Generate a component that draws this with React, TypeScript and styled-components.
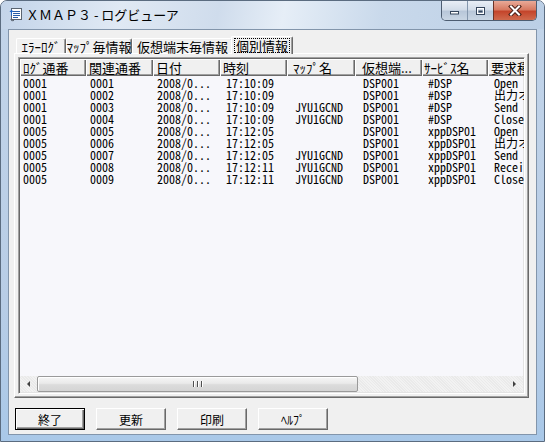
import styled, { createGlobalStyle } from 'styled-components';

const GlobalStyle = createGlobalStyle`
  html, body {
    margin: 0;
    padding: 0;
    background: #ffffff;
  }
  body {
    font-family: "Noto Sans CJK JP", "Liberation Sans", sans-serif;
  }
`;

const Window = styled.div`
  width: 545px;
  height: 442px;
  box-sizing: border-box;
  display: flex;
  flex-direction: column;
  border: 1px solid #5b6c80;
  border-radius: 7px 7px 0 0;
  overflow: hidden;
  background: linear-gradient(180deg, #cddcee 0px, #c2d4e9 28px, #b8cde6 300px, #a9c8e8 100%);
`;

const TitleBar = styled.div`
  height: 28px;
  flex-shrink: 0;
  display: flex;
  align-items: flex-start;
  padding-left: 7px;
  background: linear-gradient(100deg, #c3d4e9 0%, #e0e9f4 22%, #cfdcec 40%, #e6eef7 52%, #c9d9eb 70%, #bbcfe6 100%);
`;

const AppIcon = styled.svg`
  width: 16px;
  height: 16px;
  margin-top: 5px;
  flex-shrink: 0;
`;

const Title = styled.div`
  margin-left: 2px;
  margin-top: 6px;
  font-size: 13px;
  line-height: 16px;
  color: #000;
  white-space: nowrap;
`;

const CaptionGroup = styled.div`
  margin-left: auto;
  margin-right: 7px;
  display: flex;
  height: 19px;
  border: 1px solid #4d5d71;
  border-top: none;
  border-radius: 0 0 5px 5px;
  overflow: hidden;
`;

const CaptionButton = styled.div<{ $w: number; $close?: boolean }>`
  width: ${({ $w }) => $w}px;
  height: 19px;
  display: flex;
  align-items: center;
  justify-content: center;
  box-sizing: border-box;
  border-left: ${({ $close }) => ($close ? '1px solid #6b3326' : '1px solid #8497ad')};
  &:first-child {
    border-left: none;
  }
  background: ${({ $close }) =>
    $close
      ? 'linear-gradient(180deg, #e9aa98 0%, #d77a62 45%, #c4452b 55%, #cf6a4d 100%)'
      : 'linear-gradient(180deg, #e8eef6 0%, #d3dde9 45%, #b8c7d9 55%, #c9d6e4 100%)'};
`;

const Client = styled.div`
  flex: 1;
  margin: 0 7px 6px 7px;
  border: 1px solid #8295ab;
  background: #f0f0f0;
  display: flex;
  flex-direction: column;
  padding: 6px 7px 4px 5px;
  min-height: 0;
`;

const TabStrip = styled.div`
  height: 17px;
  display: flex;
  align-items: flex-end;
  padding-left: 2px;
  flex-shrink: 0;
`;

const Tab = styled.div<{ $w: number; $active?: boolean }>`
  position: relative;
  width: ${({ $w }) => $w}px;
  height: ${({ $active }) => ($active ? 18 : 15)}px;
  margin: ${({ $active }) => ($active ? '0 -2px -1px -2px' : '0')};
  z-index: ${({ $active }) => ($active ? 1 : 0)};
  box-sizing: border-box;
  background: #f0f0f0;
  border-top: 1px solid #ffffff;
  border-left: 1px solid #ffffff;
  border-right: 1px solid #696969;
  border-radius: 2px 2px 0 0;
  box-shadow: inset -1px 0 0 #a0a0a0;
  display: flex;
  align-items: ${({ $active }) => ($active ? 'flex-start' : 'center')};
  justify-content: center;
  font-size: 13px;
  line-height: 13px;
  color: #000;
  white-space: nowrap;
`;

const FocusLabel = styled.span`
  margin-top: 2px;
  padding: 0 1px;
  outline: 1px dotted #000;
  outline-offset: 0px;
`;

const Panel = styled.div`
  flex: 1;
  min-height: 0;
  display: flex;
  flex-direction: column;
  border-top: 1px solid #ffffff;
  border-left: 1px solid #ffffff;
  border-right: 1px solid #696969;
  border-bottom: 1px solid #696969;
  box-shadow: inset -1px -1px 0 #a0a0a0;
  padding: 3px;
`;

const ListView = styled.div`
  flex: 1;
  min-height: 0;
  display: flex;
  flex-direction: column;
  border-top: 1px solid #a0a0a0;
  border-left: 1px solid #a0a0a0;
  border-right: 1px solid #ffffff;
  border-bottom: 1px solid #ffffff;
  box-shadow: inset 1px 1px 0 #696969, inset -1px -1px 0 #e3e3e3;
  padding: 1px;
  background: #f7f7fb;
  overflow: hidden;
`;

const HeaderRow = styled.div`
  display: flex;
  height: 17px;
  flex-shrink: 0;
  background: #f0f0f0;
`;

const HeaderCell = styled.div<{ $w: number; $pad: number }>`
  width: ${({ $w }) => $w}px;
  flex-shrink: 0;
  box-sizing: border-box;
  padding-left: ${({ $pad }) => $pad}px;
  font-size: 13px;
  line-height: 17px;
  color: #000;
  white-space: nowrap;
  overflow: hidden;
  box-shadow: inset 1px 1px 0 #ffffff, inset -1px -1px 0 #696969, inset -2px -2px 0 #a0a0a0;
`;

const Rows = styled.div`
  flex: 1;
  min-height: 0;
  padding-top: 1px;
`;

const Row = styled.div`
  display: flex;
  height: 12px;
`;

const Cell = styled.div<{ $w: number; $pad: number }>`
  width: ${({ $w }) => $w}px;
  flex-shrink: 0;
  box-sizing: border-box;
  padding-left: ${({ $pad }) => $pad}px;
  font-size: 12px;
  line-height: 12px;
  font-feature-settings: "hwid" 1;
  color: #000;
  white-space: nowrap;
`;

const HScroll = styled.div`
  height: 16px;
  flex-shrink: 0;
  display: flex;
  align-items: stretch;
  background: repeating-linear-gradient(45deg, #eaeaea 0 1px, #f2f2f2 1px 2px);
`;

const ArrowButton = styled.div`
  width: 17px;
  display: flex;
  align-items: center;
  justify-content: center;
  flex-shrink: 0;
`;

const ArrowLeft = styled.div`
  width: 0;
  height: 0;
  border-top: 3px solid transparent;
  border-bottom: 3px solid transparent;
  border-right: 3px solid #404040;
`;

const ArrowRight = styled.div`
  width: 0;
  height: 0;
  border-top: 3px solid transparent;
  border-bottom: 3px solid transparent;
  border-left: 3px solid #404040;
`;

const Thumb = styled.div<{ $w: number }>`
  width: ${({ $w }) => $w}px;
  box-sizing: border-box;
  border: 1px solid #9a9a9a;
  border-radius: 2px;
  background: linear-gradient(180deg, #f6f6f6 0%, #eaeaea 45%, #dcdcdc 55%, #d4d4d4 100%);
  box-shadow: inset 1px 1px 0 #ffffff;
  display: flex;
  align-items: center;
  justify-content: center;
  gap: 1px;
`;

const Grip = styled.div`
  width: 1px;
  height: 6px;
  background: #505050;
  box-shadow: 1px 0 0 #ffffff;
  margin: 0 1px;
`;

const Track = styled.div`
  flex: 1;
`;

const ButtonRow = styled.div`
  display: flex;
  gap: 11px;
  padding: 10px 0 0 1px;
  flex-shrink: 0;
  height: 22px;
`;

const PushButton = styled.div<{ $default?: boolean }>`
  width: 70px;
  height: 22px;
  box-sizing: border-box;
  display: flex;
  align-items: center;
  justify-content: center;
  background: #f0f0f0;
  font-size: 12px;
  color: #000;
  border: 1px solid;
  border-color: ${({ $default }) =>
    $default ? '#000000' : '#ffffff #696969 #696969 #ffffff'};
  box-shadow: ${({ $default }) =>
    $default
      ? 'inset 1px 1px 0 #ffffff, inset -1px -1px 0 #696969, inset -2px -2px 0 #a0a0a0'
      : 'inset -1px -1px 0 #a0a0a0'};
`;

const columns = [
  { label: 'ﾛｸﾞ通番', width: 66, hpad: 3, dpad: 3 },
  { label: '関連通番', width: 67, hpad: 3, dpad: 4 },
  { label: '日付', width: 67, hpad: 3, dpad: 4 },
  { label: '時刻', width: 67, hpad: 3, dpad: 6 },
  { label: 'ﾏｯﾌﾟ名', width: 68, hpad: 6, dpad: 8 },
  { label: '仮想端...', width: 67, hpad: 7, dpad: 8 },
  { label: 'ｻｰﾋﾞｽ名', width: 66, hpad: 2, dpad: 6 },
  { label: '要求種別', width: 90, hpad: 3, dpad: 6 },
];

const rows = [
  ['0001', '0001', '2008/0...', '17:10:09', '', 'DSP001', '#DSP', 'Open'],
  ['0001', '0002', '2008/0...', '17:10:09', '', 'DSP001', '#DSP', '出力オープン'],
  ['0001', '0003', '2008/0...', '17:10:09', 'JYU1GCND', 'DSP001', '#DSP', 'Send'],
  ['0001', '0004', '2008/0...', '17:10:09', 'JYU1GCND', 'DSP001', '#DSP', 'Close'],
  ['0005', '0005', '2008/0...', '17:12:05', '', 'DSP001', 'xppDSP01', 'Open'],
  ['0005', '0006', '2008/0...', '17:12:05', '', 'DSP001', 'xppDSP01', '出力オープン'],
  ['0005', '0007', '2008/0...', '17:12:05', 'JYU1GCND', 'DSP001', 'xppDSP01', 'Send'],
  ['0005', '0008', '2008/0...', '17:12:11', 'JYU1GCND', 'DSP001', 'xppDSP01', 'Receive'],
  ['0005', '0009', '2008/0...', '17:12:11', 'JYU1GCND', 'DSP001', 'xppDSP01', 'Close'],
];

const tabs = [
  { label: 'ｴﾗｰﾛｸﾞ', width: 50 },
  { label: 'ﾏｯﾌﾟ毎情報', width: 66 },
  { label: '仮想端末毎情報', width: 101 },
  { label: '個別情報', width: 62, active: true },
];

const buttons = ['終了', '更新', '印刷', 'ﾍﾙﾌﾟ'];

export default function App() {
  return (
    <>
      <GlobalStyle />
      <Window>
        <TitleBar>
          <AppIcon viewBox="0 0 16 16">
            <rect x="3.5" y="2.5" width="10" height="11" fill="#ffffff" stroke="#5a6470" />
            <line x1="5" y1="5.5" x2="12" y2="5.5" stroke="#2a5fa8" />
            <line x1="5" y1="7.5" x2="12" y2="7.5" stroke="#2a5fa8" />
            <line x1="5" y1="9.5" x2="12" y2="9.5" stroke="#2a5fa8" />
            <line x1="5" y1="11.5" x2="10" y2="11.5" stroke="#2a5fa8" />
            <path d="M1.5 6 L3.5 3.5 L5.5 6 Z" fill="#1f66c4" />
            <rect x="3" y="5.5" width="1" height="4" fill="#1f66c4" />
            <path d="M2.5 13.5 Q3.5 15.5 6 14.5" fill="none" stroke="#5a6470" />
          </AppIcon>
          <Title>ＸＭＡＰ３ - ログビューア</Title>
          <CaptionGroup>
            <CaptionButton $w={25}>
              <svg width="11" height="9" viewBox="0 0 11 9">
                <rect x="1.5" y="5.5" width="8" height="2.5" fill="#ffffff" stroke="#35465c" />
              </svg>
            </CaptionButton>
            <CaptionButton $w={26}>
              <svg width="11" height="10" viewBox="0 0 11 10">
                <rect x="1.5" y="1.5" width="8" height="7" fill="none" stroke="#35465c" />
                <rect x="2.5" y="2.5" width="6" height="5" fill="none" stroke="#ffffff" />
                <rect x="3.5" y="4.5" width="4" height="2" fill="#35465c" />
              </svg>
            </CaptionButton>
            <CaptionButton $w={43} $close>
              <svg width="14" height="11" viewBox="0 0 14 11">
                <path d="M3 1.5 L11 9.5 M11 1.5 L3 9.5" stroke="#4a1f16" strokeWidth="4" strokeLinecap="square" />
                <path d="M3 1.5 L11 9.5 M11 1.5 L3 9.5" stroke="#ffffff" strokeWidth="2" strokeLinecap="square" />
              </svg>
            </CaptionButton>
          </CaptionGroup>
        </TitleBar>
        <Client>
          <TabStrip>
            {tabs.map((t) => (
              <Tab key={t.label} $w={t.width} $active={t.active}>
                {t.active ? <FocusLabel>{t.label}</FocusLabel> : t.label}
              </Tab>
            ))}
          </TabStrip>
          <Panel>
            <ListView>
              <HeaderRow>
                {columns.map((c) => (
                  <HeaderCell key={c.label} $w={c.width} $pad={c.hpad}>
                    {c.label}
                  </HeaderCell>
                ))}
              </HeaderRow>
              <Rows>
                {rows.map((r, i) => (
                  <Row key={i}>
                    {r.map((v, j) => (
                      <Cell key={j} $w={columns[j].width} $pad={columns[j].dpad}>
                        {v}
                      </Cell>
                    ))}
                  </Row>
                ))}
              </Rows>
              <HScroll>
                <ArrowButton>
                  <ArrowLeft />
                </ArrowButton>
                <Thumb $w={321}>
                  <Grip />
                  <Grip />
                  <Grip />
                </Thumb>
                <Track />
                <ArrowButton>
                  <ArrowRight />
                </ArrowButton>
              </HScroll>
            </ListView>
          </Panel>
          <ButtonRow>
            {buttons.map((b, i) => (
              <PushButton key={b} $default={i === 0}>
                {b}
              </PushButton>
            ))}
          </ButtonRow>
        </Client>
      </Window>
    </>
  );
}
